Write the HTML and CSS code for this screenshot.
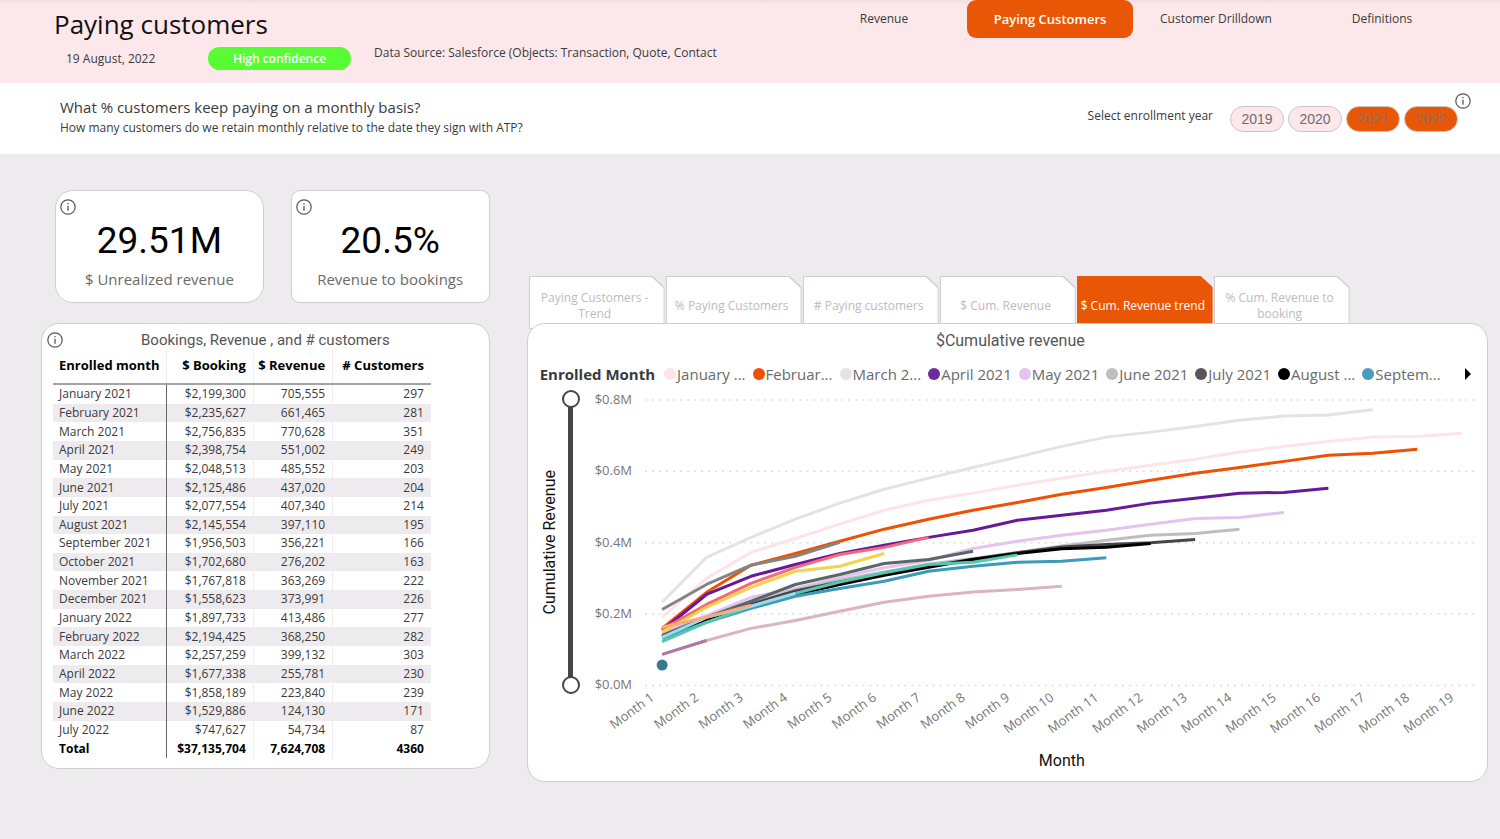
FILE: index.html
```html
<!DOCTYPE html>
<html lang="en">

<head>
    <meta charset="UTF-8">
    <meta name="viewport" content="width=device-width, initial-scale=1.0">
    <title>Paying customers</title>
    <link rel="stylesheet" href="styles.css">
</head>

<body>
    <svg class="sprite" aria-hidden="true">
        <symbol id="info" viewBox="0 0 16 16">
            <circle cx="8" cy="8" r="7.2" fill="none" stroke="currentColor" stroke-width="1.2" />
            <path d="M8 6.8v5M8 4v1.3" stroke="currentColor" stroke-width="1.3" />
        </symbol>
    </svg>

    <header class="header">
        <div class="heading">
            <h1>Paying customers</h1>
            <div class="meta">
                <span class="date">19 August, 2022</span>
                <span class="confidence">High confidence</span>
                <span class="source">Data Source: Salesforce (Objects: Transaction, Quote, Contact</span>
            </div>
        </div>
        <nav class="pages">
            <a href="#revenue">Revenue</a>
            <a href="#paying" class="active">Paying Customers</a>
            <a href="#drilldown">Customer Drilldown</a>
            <a href="#definitions">Definitions</a>
        </nav>
    </header>

    <section class="question">
        <div>
            <h2>What % customers keep paying on a monthly basis?</h2>
            <p>How many customers do we retain monthly relative to the date they sign with ATP?</p>
        </div>
        <div class="years">
            <span class="years-label">Select enrollment year</span>
            <button type="button" aria-pressed="false">2019</button>
            <button type="button" aria-pressed="false">2020</button>
            <button type="button" aria-pressed="true">2021</button>
            <button type="button" aria-pressed="true">2022</button>
            <svg class="info"><use href="#info" /></svg>
        </div>
    </section>

    <main class="board">
        <div class="kpis">
            <div class="kpi kpi-unrealized">
                <svg class="info"><use href="#info" /></svg>
                <p class="kpi-value">29.51M</p>
                <p class="kpi-label">$ Unrealized revenue</p>
            </div>
            <div class="kpi kpi-ratio">
                <svg class="info"><use href="#info" /></svg>
                <p class="kpi-value">20.5%</p>
                <p class="kpi-label">Revenue to bookings</p>
            </div>
        </div>

        <div class="tabs">
            <button type="button"><span>Paying Customers - Trend</span></button>
            <button type="button"><span>% Paying Customers</span></button>
            <button type="button"><span># Paying customers</span></button>
            <button type="button"><span>$ Cum. Revenue</span></button>
            <button type="button" class="active"><span>$ Cum. Revenue trend</span></button>
            <button type="button"><span>% Cum. Revenue to booking</span></button>
        </div>

        <section class="card table-card">
            <svg class="info"><use href="#info" /></svg>
            <h3>Bookings, Revenue , and # customers</h3>
            <table>
                <thead>
                    <tr><th>Enrolled month</th><th>$ Booking</th><th>$ Revenue</th><th># Customers</th></tr>
                </thead>
                <tbody>
                    <tr><td>January 2021</td><td>$2,199,300</td><td>705,555</td><td>297</td></tr>
                    <tr><td>February 2021</td><td>$2,235,627</td><td>661,465</td><td>281</td></tr>
                    <tr><td>March 2021</td><td>$2,756,835</td><td>770,628</td><td>351</td></tr>
                    <tr><td>April 2021</td><td>$2,398,754</td><td>551,002</td><td>249</td></tr>
                    <tr><td>May 2021</td><td>$2,048,513</td><td>485,552</td><td>203</td></tr>
                    <tr><td>June 2021</td><td>$2,125,486</td><td>437,020</td><td>204</td></tr>
                    <tr><td>July 2021</td><td>$2,077,554</td><td>407,340</td><td>214</td></tr>
                    <tr><td>August 2021</td><td>$2,145,554</td><td>397,110</td><td>195</td></tr>
                    <tr><td>September 2021</td><td>$1,956,503</td><td>356,221</td><td>166</td></tr>
                    <tr><td>October 2021</td><td>$1,702,680</td><td>276,202</td><td>163</td></tr>
                    <tr><td>November 2021</td><td>$1,767,818</td><td>363,269</td><td>222</td></tr>
                    <tr><td>December 2021</td><td>$1,558,623</td><td>373,991</td><td>226</td></tr>
                    <tr><td>January 2022</td><td>$1,897,733</td><td>413,486</td><td>277</td></tr>
                    <tr><td>February 2022</td><td>$2,194,425</td><td>368,250</td><td>282</td></tr>
                    <tr><td>March 2022</td><td>$2,257,259</td><td>399,132</td><td>303</td></tr>
                    <tr><td>April 2022</td><td>$1,677,338</td><td>255,781</td><td>230</td></tr>
                    <tr><td>May 2022</td><td>$1,858,189</td><td>223,840</td><td>239</td></tr>
                    <tr><td>June 2022</td><td>$1,529,886</td><td>124,130</td><td>171</td></tr>
                    <tr><td>July 2022</td><td>$747,627</td><td>54,734</td><td>87</td></tr>
                    <tr class="total"><td>Total</td><td>$37,135,704</td><td>7,624,708</td><td>4360</td></tr>
                </tbody>
            </table>
        </section>

        <section class="card chart-card">
            <h3>$Cumulative revenue</h3>
            <div class="legend">
                <strong>Enrolled Month</strong>
                <span class="key jan">January ...</span>
                <span class="key feb">Februar...</span>
                <span class="key mar">March 2...</span>
                <span class="key apr">April 2021</span>
                <span class="key may">May 2021</span>
                <span class="key jun">June 2021</span>
                <span class="key jul">July 2021</span>
                <span class="key aug">August ...</span>
                <span class="key sep">Septem...</span>
                <button type="button" class="next" aria-label="More months"></button>
            </div>
            <div class="chart">
                <div class="y-axis">
                    <span class="y-title">Cumulative Revenue</span>
                    <div class="zoom">
                        <input type="range" min="0" max="100" value="100" aria-label="Maximum revenue">
                        <input type="range" min="0" max="100" value="0" aria-label="Minimum revenue">
                    </div>
                </div>
                <svg class="plot" id="plot" viewBox="0 0 890 350"></svg>
            </div>
            <p class="x-title">Month</p>
        </section>
    </main>

    <script src="chart.js"></script>
</body>

</html>
```
FILE: styles.css
```css
* {
    margin: 0;
    padding: 0;
    box-sizing: border-box;
}

:root {
    --orange: #e95706;
    --pink: #fce8ea;
    --page: #eeebee;
    --line: #cfcdd0;
    --text: #3a3a3a;
    --muted: #6a6a6a;
}

body {
    background-color: var(--page);
    color: var(--text);
    font-family: "Open Sans", "Noto Sans", sans-serif;
    font-size: 12px;
    line-height: 16px;
}

button {
    font-family: inherit;
    cursor: pointer;
}

.sprite {
    display: none;
}

.info {
    width: 16px;
    height: 16px;
    color: #555;
}

/* Header */
.header {
    display: flex;
    justify-content: space-between;
    padding: 0 35px 0 54px;
    height: 83px;
    background: linear-gradient(#f1dcde, var(--pink) 5px);
}

.heading {
    padding-top: 6px;
}

h1 {
    font-size: 26px;
    font-weight: 400;
    line-height: 36px;
    color: #111;
}

.meta {
    display: flex;
    align-items: flex-start;
    padding-top: 5px;
    white-space: nowrap;
}

.date {
    width: 154px;
    padding: 4px 0 0 12px;
}

.confidence {
    width: 143px;
    height: 23px;
    border-radius: 12px;
    background-color: #56fd33;
    color: #fff;
    font-weight: 600;
    line-height: 23px;
    text-align: center;
}

.source {
    padding-left: 23px;
    line-height: 12px;
}

.pages {
    display: flex;
}

.pages a {
    width: 166px;
    height: 38px;
    border-radius: 9px;
    color: var(--text);
    line-height: 38px;
    text-align: center;
    text-decoration: none;
}

.pages .active {
    background-color: var(--orange);
    color: #fff;
    font-size: 13px;
    font-weight: 600;
}

/* Question band */
.question {
    display: flex;
    justify-content: space-between;
    height: 71px;
    padding: 14px 29px 0 60px;
    background-color: #fff;
}

h2 {
    font-size: 15px;
    font-weight: 400;
    line-height: 20px;
}

.question p {
    line-height: 22px;
}

.years {
    display: flex;
    align-items: flex-start;
    gap: 4px;
    padding-top: 9px;
}

.years-label {
    padding-right: 13px;
    line-height: 20px;
}

.years button {
    width: 54px;
    height: 26px;
    border: 1px solid #c9c5ca;
    border-radius: 13px;
    background-color: var(--pink);
    color: #6e6c70;
    font-family: "Liberation Sans", Arial, sans-serif;
    font-size: 14px;
}

.years button[aria-pressed="true"] {
    background-color: var(--orange);
    color: #8c6d61;
}

.years .info {
    margin: -13px 0 0 -7px;
}

/* Board */
.board {
    display: grid;
    grid-template-columns: 7fr 15fr;
    column-gap: 37px;
    align-items: start;
    padding: 36px 12px 58px 41px;
}

.kpis {
    display: flex;
    gap: 27px;
    padding: 0 0 20px 14px;
}

.kpi {
    flex: 1;
    height: 113px;
    border: 1px solid var(--line);
    background-color: #fff;
    text-align: center;
}

.kpi-unrealized {
    flex-grow: 1.05;
    border-radius: 18px;
}

.kpi-ratio {
    border-radius: 9px;
}

.kpi .info {
    display: block;
    margin: 8px 0 0 4px;
}

.kpi-value {
    color: #000;
    font-family: Roboto, sans-serif;
    font-size: 37px;
    line-height: 44px;
    padding-top: 4px;
}

.kpi-label {
    color: var(--muted);
    font-size: 15px;
    line-height: 32px;
}

/* Tabs sit half under the chart card */
.tabs {
    display: flex;
    align-self: end;
    gap: 1px;
    padding-left: 2px;
    margin-bottom: -6px;
}

.tabs button {
    position: relative;
    width: 136px;
    height: 53px;
    padding: 6px 8px 0 4px;
    border: none;
    background-color: var(--line);
    clip-path: polygon(0 0, 124px 0, 100% 11px, 100% 100%, 0 100%);
    color: #bdbbbf;
    font-size: 12px;
    line-height: 16px;
}

.tabs button::before {
    content: '';
    position: absolute;
    inset: 1px;
    background-color: #fff;
    clip-path: polygon(0 0, 122px 0, 100% 11px, 100% 100%, 0 100%);
}

.tabs span {
    position: relative;
}

.tabs .active {
    background-color: var(--orange);
    color: #fff;
    font-weight: 500;
    white-space: nowrap;
}

.tabs .active::before {
    background-color: var(--orange);
}

/* Cards */
.card {
    position: relative;
    border: 1px solid var(--line);
    border-radius: 18px;
    background-color: #fff;
}

h3 {
    color: #555;
    font-family: Roboto, sans-serif;
    font-size: 15px;
    font-weight: 400;
    line-height: 20px;
    text-align: center;
}

.table-card {
    padding: 6px 11px 10px;
}

.table-card .info {
    position: absolute;
    top: 8px;
    left: 5px;
}

table {
    width: 89%;
    height: 408px;
    border-collapse: collapse;
    table-layout: fixed;
}

th {
    height: 34px;
    padding: 0 7px 4px 0;
    border-bottom: 2px solid #a3a3a3;
    color: #000;
    font-size: 13px;
    font-weight: 700;
    text-align: right;
    white-space: nowrap;
}

th:first-child {
    width: 30%;
    text-align: left;
    padding-left: 6px;
}

th:nth-child(2) {
    width: 23%;
}

th:nth-child(3) {
    width: 21%;
}

td {
    padding: 0 7px 0 0;
    line-height: 18px;
    text-align: right;
}

td:first-child {
    padding-left: 6px;
    border-right: 1px solid #666;
    text-align: left;
}

td:nth-child(2),
td:nth-child(3),
th:not(:last-child) {
    border-right: 1px solid #eeecee;
}

tbody tr:nth-child(even):not(.total) {
    background-color: #eeebee;
}

.total {
    color: #000;
    font-weight: 700;
}

/* Chart */
.chart-card {
    padding: 7px 6px 9px 12px;
}

.chart-card h3 {
    font-size: 16px;
}

.legend {
    display: flex;
    align-items: center;
    gap: 7px;
    height: 26px;
    margin-top: 10px;
    color: var(--muted);
    font-size: 15px;
    white-space: nowrap;
}

.legend strong {
    color: var(--text);
    margin-right: 2px;
}

.key::before {
    content: '';
    display: inline-block;
    width: 12px;
    height: 12px;
    margin-right: 1px;
    border-radius: 50%;
    background-color: var(--dot);
}

.jan { --dot: #fce4e8; }
.feb { --dot: #f05000; }
.mar { --dot: #e4e2e6; }
.apr { --dot: #702aa0; }
.may { --dot: #e4c4ee; }
.jun { --dot: #bfbdc0; }
.jul { --dot: #58565a; }
.aug { --dot: #000; }
.sep { --dot: #489cbc; }

.next {
    margin: 0 10px 0 auto;
    border: 6px solid transparent;
    border-left-color: #000;
    border-right: none;
    background: none;
}

.chart {
    display: flex;
    margin-top: 3px;
}

.y-axis {
    display: flex;
    align-items: center;
    height: 304px;
}

.y-title {
    width: 20px;
    color: #111;
    font-family: Roboto, sans-serif;
    font-size: 16px;
    line-height: 20px;
    writing-mode: vertical-rl;
    transform: rotate(180deg);
    white-space: nowrap;
}

.zoom {
    display: grid;
    width: 20px;
    height: 100%;
    margin: 0 9px 0 1px;
    background: linear-gradient(#464648, #464648) center / 5px 90% no-repeat;
}

.zoom input {
    grid-area: 1 / 1;
    appearance: none;
    width: 20px;
    height: 100%;
    background: none;
    writing-mode: vertical-lr;
    direction: rtl;
    pointer-events: none;
}

.zoom input::-webkit-slider-thumb {
    appearance: none;
    width: 18px;
    height: 18px;
    border: 2px solid #464648;
    border-radius: 50%;
    background-color: #fff;
    pointer-events: auto;
}

.plot {
    flex: 1;
    min-width: 0;
    overflow: visible;
}

.plot text {
    fill: #777;
    font-size: 13px;
    text-anchor: end;
}

.grid {
    stroke: #dcdcde;
    stroke-width: 1.5;
    stroke-dasharray: 2 5;
}

.series {
    fill: none;
    stroke-width: 3;
    stroke-linejoin: round;
}

.x-title {
    padding-left: 103px;
    color: #111;
    font-family: Roboto, sans-serif;
    font-size: 16px;
    line-height: 22px;
    text-align: center;
    margin-top: 9px;
}

@media (max-width: 1100px) {
    .board {
        grid-template-columns: minmax(0, 1fr);
    }

    .tabs {
        grid-row: 3;
        margin-top: 20px;
        flex-wrap: wrap;
    }

    .legend {
        height: auto;
        flex-wrap: wrap;
    }

    .header,
    .question {
        height: auto;
        flex-wrap: wrap;
    }
}
```
FILE: chart.js
```js
// cumulative revenue per enrolment month, in $K
const series = [
    { color: '#fce4e8', values: [191, 300, 373, 412, 452, 491, 519, 539, 561, 581, 600, 617, 634, 654, 670, 684, 696, 698, 707] },
    { color: '#f05000', values: [160, 261, 337, 370, 404, 438, 466, 491, 513, 536, 555, 575, 595, 611, 628, 645, 651, 662] },
    { color: '#e4e2e6', values: [233, 359, 415, 466, 511, 550, 581, 611, 640, 670, 696, 710, 726, 743, 755, 758, 773] },
    { color: '#66199a', values: [154, 255, 306, 339, 370, 393, 415, 435, 463, 477, 491, 511, 525, 539, 541, 553] },
    { color: '#e4c4ee', values: [150, 196, 247, 272, 303, 330, 350, 384, 404, 421, 435, 452, 468, 471, 485] },
    { color: '#bfbdc0', values: [143, 190, 234, 268, 295, 318, 340, 356, 373, 391, 407, 421, 426, 438] },
    { color: '#464648', values: [137, 188, 228, 265, 290, 312, 334, 354, 372, 388, 395, 400, 409] },
    { color: '#000000', values: [137, 185, 219, 255, 283, 309, 331, 353, 370, 383, 387, 398] },
    { color: '#3c9abc', values: [132, 177, 216, 250, 272, 292, 320, 334, 345, 348, 358] },
    { color: '#dcb5ba', values: [87, 126, 160, 182, 208, 233, 250, 262, 269, 278] },
    { color: '#54c8ae', values: [123, 177, 222, 258, 290, 316, 339, 345, 366] },
    { color: '#5b6668', values: [140, 191, 236, 283, 311, 342, 353, 376] },
    { color: '#f86878', values: [157, 227, 286, 331, 367, 387, 415] },
    { color: '#f2d44a', values: [149, 219, 275, 320, 334, 370] },
    { color: '#818585', values: [213, 283, 337, 362, 401] },
    { color: '#a0d8ec', values: [135, 191, 222, 258] },
    { color: '#f8a880', values: [163, 191, 225] },
    { color: '#b078a8', values: [87, 126] },
    { color: '#3a788c', values: [57] }
];

const plot = document.getElementById('plot');
const x = month => 72 + (month - 1) * 44.35;
const y = value => 295 - value * 285 / 800;

function add(tag, attrs, text) {
    const el = document.createElementNS('http://www.w3.org/2000/svg', tag);
    for (const name in attrs) {
        el.setAttribute(name, attrs[name]);
    }
    if (text) {
        el.textContent = text;
    }
    plot.appendChild(el);
}

for (let value = 0; value <= 800; value += 200) {
    add('line', { class: 'grid', x1: 55, x2: 885, y1: y(value), y2: y(value) });
    add('text', { x: 42, y: y(value) + 4 }, '$' + (value / 1000).toFixed(1) + 'M');
}

for (let month = 1; month <= 19; month++) {
    const left = x(month) - 7;
    add('text', { x: left, y: 309, transform: `rotate(-36 ${left} 309)` }, 'Month ' + month);
}

series.forEach(line => {
    if (line.values.length === 1) {
        add('circle', { cx: x(1), cy: y(line.values[0]), r: 5.5, fill: line.color });
        return;
    }
    const points = line.values.map((value, i) => x(i + 1) + ',' + y(value)).join(' ');
    add('polyline', { class: 'series', points: points, stroke: line.color });
});
```
